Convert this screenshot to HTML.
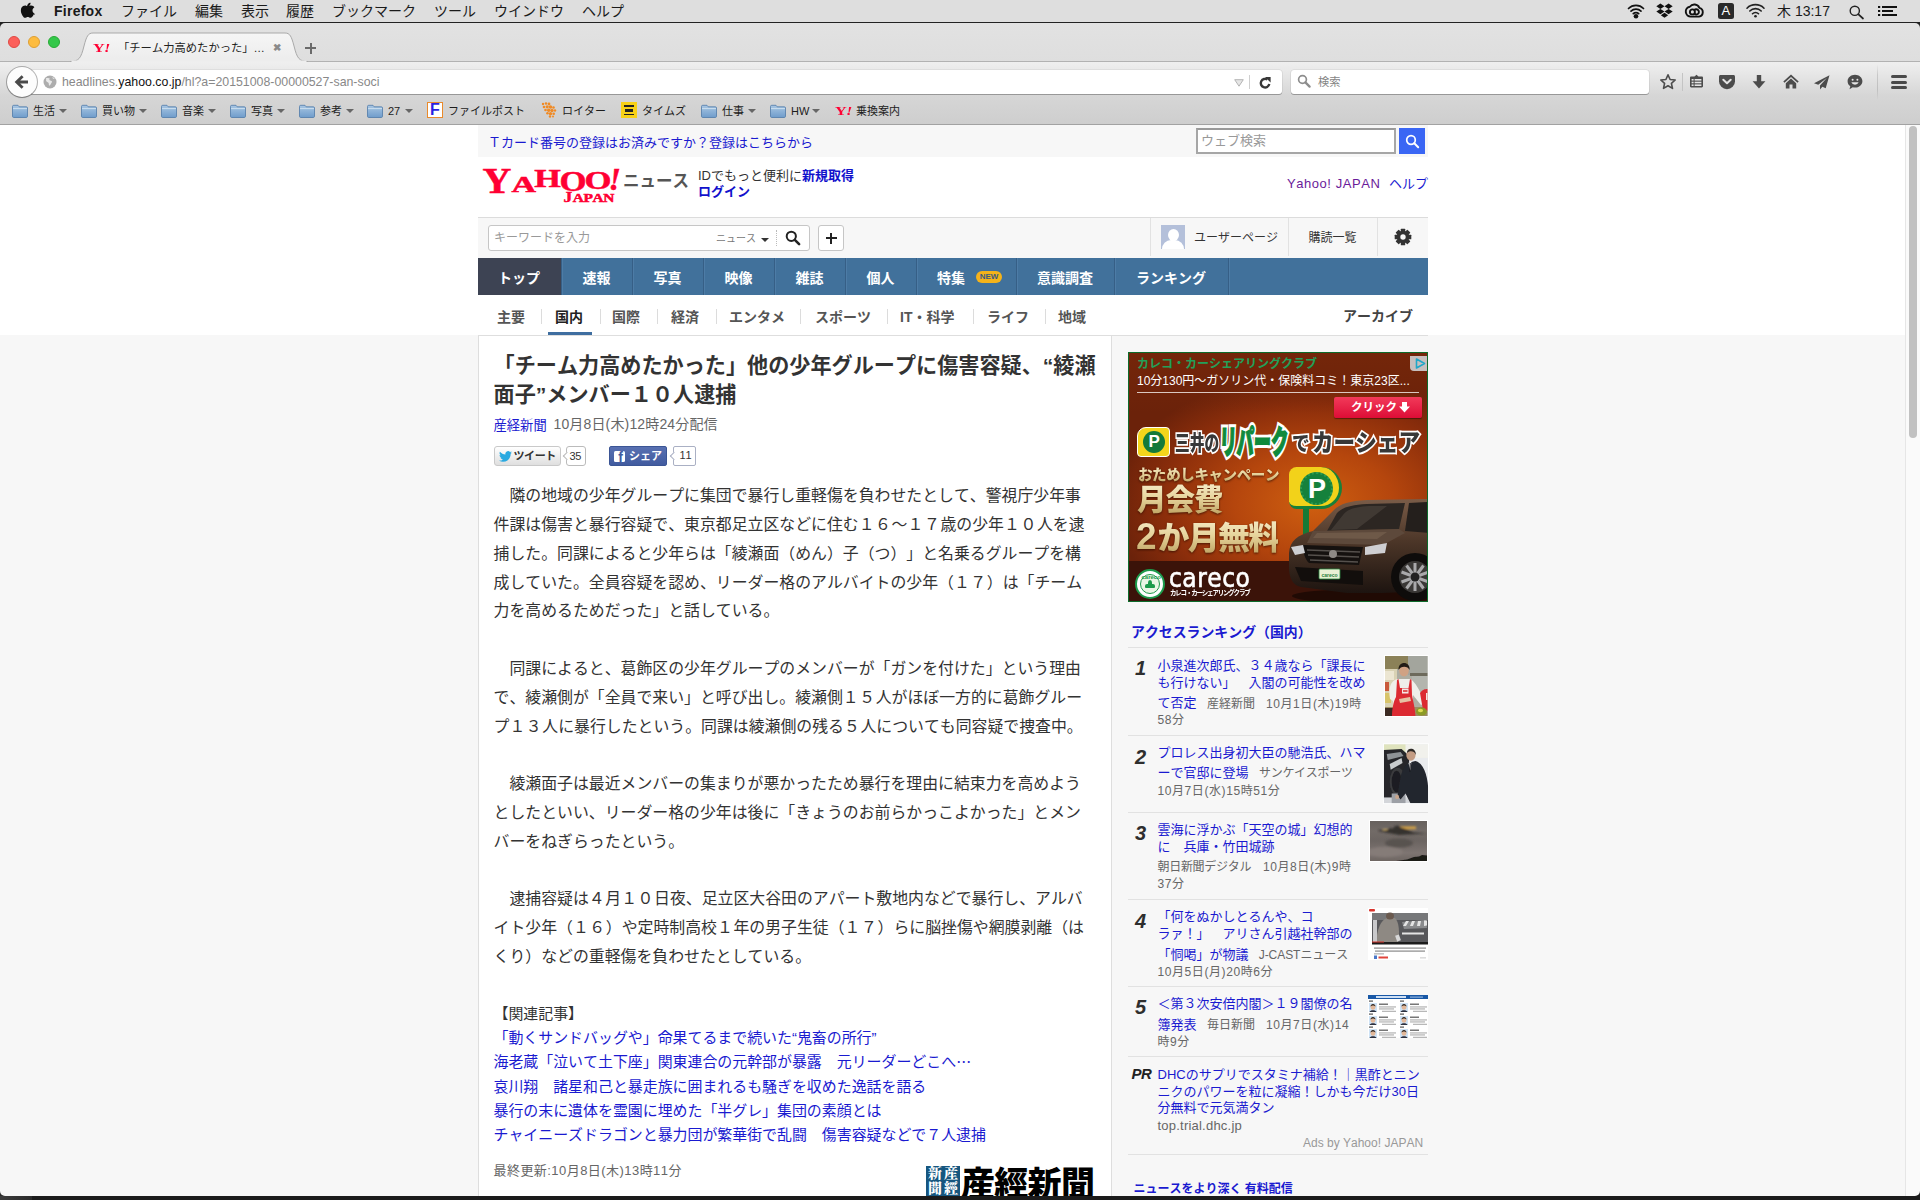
<!DOCTYPE html>
<html lang="ja">
<head>
<meta charset="utf-8">
<title>「チーム力高めたかった」他の少年グループに傷害容疑</title>
<style>
*{box-sizing:border-box;margin:0;padding:0}
html,body{width:1920px;height:1200px;overflow:hidden;background:#f7f7f7}
body{position:relative;font-family:"Liberation Sans","Noto Sans CJK JP",sans-serif;font-size:13px;color:#333;-webkit-font-smoothing:antialiased;text-spacing-trim:space-all;font-kerning:none}
.abs{position:absolute}
.t{position:absolute;white-space:nowrap;line-height:1}
a{color:#0000de;text-decoration:none}
svg{display:block;position:absolute;overflow:visible}

/* ---------- mac menubar ---------- */
#menubar{left:0;top:0;width:1920px;height:22px;background:#dedede}
#menubar .t{top:3px;font-size:14px;line-height:16px;color:#1a1a1a}
#winedge{left:0;top:22px;width:1920px;height:1px;background:#222}
/* ---------- firefox chrome ---------- */
#tabbar{left:0;top:23px;width:1920px;height:39px;background:linear-gradient(#e2e2e2,#dedede)}
#navbar{left:0;top:61px;width:1920px;height:64px;background:linear-gradient(#efefef 0,#e9e9e9 14%,#d6d6d6 54%,#cecece 100%);border-top:1px solid #b2b2b2;border-bottom:1px solid #a2a2a2}
.field{position:absolute;top:70.3px;height:23.7px;background:#fff;border-radius:3px;box-shadow:0 0 0 .6px rgba(0,0,0,.10),0 1px .5px rgba(0,0,0,.25)}
.bm{position:absolute;top:104px;font-size:11px;line-height:14px;color:#1c1c1c;white-space:nowrap}
.folder{position:absolute;top:104px;width:16px;height:13px}
.dd{position:absolute;top:109px;width:0;height:0;border:4px solid transparent;border-top:4px solid #666;border-bottom:0}

/* ---------- page ---------- */
.gold{background:linear-gradient(#f6ecc8 0,#e6d39b 45%,#b99c5a 100%);-webkit-background-clip:text;background-clip:text;color:transparent;filter:drop-shadow(0 1px 1px rgba(40,10,0,.7))}

.rk{font-size:13px;line-height:17px;color:#1a1ad0}
.mt{font-size:12px;line-height:17px;color:#666}

.ttl{font-size:21.14px;line-height:30px;font-weight:bold;color:#333}
.fw{letter-spacing:.6px}
.bd{font-size:15.88px;line-height:28.8px;color:#333}
.lk{font-size:14.93px;line-height:20px;color:#1a1ad0}

#pagewhite{left:0;top:125px;width:1905px;height:210px;background:#fff}
#scroll{left:1905px;top:125px;width:15px;height:1071px;background:#fafafa;border-left:1px solid #e6e6e6}
#thumb{left:1909px;top:126px;width:8px;height:312px;border-radius:4px;background:#c1c1c1}
#blackbar{left:0;top:1195.6px;width:1920px;height:5px;background:#1b1b1b}
</style>
</head>
<body>
<!-- page background -->
<div class="abs" id="pagewhite"></div>

<!-- ===== top strip ===== -->
<div class="abs" style="left:478px;top:125px;width:950px;height:32px;background:#f7f7f7"></div>
<a class="t" style="left:488px;top:136px;font-size:13px;line-height:14px;color:#1a1ad0">Ｔカード番号の登録はお済みですか？登録はこちらから</a>
<div class="abs" style="left:1196px;top:128px;width:200px;height:26px;background:#fff;border:2px solid #a6a6a6;border-top-color:#999"></div>
<span class="t" style="left:1201px;top:134px;font-size:13px;line-height:14px;color:#999">ウェブ検索</span>
<div class="abs" style="left:1399px;top:128px;width:26px;height:26px;background:#3a66f4"></div>
<svg style="left:1405px;top:134px" width="15" height="15" viewBox="0 0 15 15"><circle cx="6" cy="6" r="4.300" fill="none" stroke="#fff" stroke-width="1.700"/><path d="M9.300 9.300l3.900 3.900" stroke="#fff" stroke-width="2" stroke-linecap="round"/></svg>

<!-- ===== logo row ===== -->
<svg style="left:476px;top:160px" width="150" height="50" viewBox="0 0 150 50" font-family="'Liberation Serif',serif" font-weight="bold" fill="#ff0033" stroke="#ff0033" stroke-width=".5">
<text transform="translate(6.5,33.2) scale(1.08,.97)" font-size="37">Y</text>
<text transform="translate(35.5,32) scale(1.58,1.08)" font-size="21.5">A</text>
<text transform="translate(58.2,27) scale(1.40,1)" font-size="24.4">H</text>
<text transform="translate(83.6,31.4) scale(1.2,.98)" font-size="29">O</text>
<text transform="translate(108.4,28.8) scale(1.36,1)" font-size="25.5">O</text>
<text transform="translate(132.5,30)" font-size="32" font-style="italic">!</text>
<text transform="translate(87.5,41.6) scale(1.12,1)" font-size="15.5">J</text>
<text transform="translate(96.8,41.6) scale(1.22,1)" font-size="12.6" style="letter-spacing:-.3px">APAN</text>
</svg>
<span class="t" style="left:623px;top:171px;font-size:16.5px;line-height:20px;font-weight:bold;color:#555">ニュース</span>
<span class="t" style="left:698px;top:169px;font-size:13px;line-height:14px;color:#333">IDでもっと便利に<a style="font-weight:bold;color:#1111cc">新規取得</a></span>
<a class="t" style="left:698px;top:185px;font-size:13px;line-height:14px;font-weight:bold;color:#1111cc">ログイン</a>
<a class="t" style="left:1287px;top:177px;font-size:13px;line-height:14px;color:#6a1b9a;letter-spacing:.55px">Yahoo! JAPAN</a>
<a class="t" style="left:1389px;top:177px;font-size:13px;line-height:14px;color:#1a1ad0">ヘルプ</a>

<!-- ===== search row ===== -->
<div class="abs" style="left:478px;top:217px;width:950px;height:41px;background:#f7f7f7;border-top:1px solid #dcdcdc"></div>
<div class="abs" style="left:488px;top:225px;width:322px;height:26px;background:#fff;border:1px solid #c6c6c6;border-radius:3px"></div>
<span class="t" style="left:494px;top:232px;font-size:12px;line-height:13px;color:#999">キーワードを入力</span>
<span class="t" style="left:716px;top:233px;font-size:10px;line-height:11px;color:#777">ニュース</span>
<div class="abs" style="left:761px;top:238px;width:0;height:0;border:4px solid transparent;border-top:4.500px solid #333;border-bottom:0"></div>
<div class="abs" style="left:776px;top:230px;width:0;height:16px;border-left:1px dotted #bbb"></div>
<svg style="left:785px;top:230px" width="16" height="16" viewBox="0 0 16 16"><circle cx="6.300" cy="6.300" r="4.600" fill="none" stroke="#222" stroke-width="2"/><path d="M9.800 9.800l4.300 4.300" stroke="#222" stroke-width="2.600" stroke-linecap="round"/></svg>
<div class="abs" style="left:818px;top:225px;width:26px;height:26px;background:#fff;border:1px solid #c6c6c6;border-radius:3px"></div>
<div class="abs" style="left:825.500px;top:237px;width:11px;height:2px;background:#222"></div>
<div class="abs" style="left:830px;top:232.500px;width:2px;height:11px;background:#222"></div>

<div class="abs" style="left:1150px;top:218px;width:1px;height:38px;background:#e2e2e2"></div>
<div class="abs" style="left:1288px;top:218px;width:1px;height:38px;background:#e2e2e2"></div>
<div class="abs" style="left:1377px;top:218px;width:1px;height:38px;background:#e2e2e2"></div>
<div class="abs" style="left:1161px;top:225px;width:24px;height:24px;background:#b4c0da;overflow:hidden"><div class="abs" style="left:6.500px;top:4px;width:11px;height:12px;border-radius:50%;background:#fff"></div><div class="abs" style="left:1px;top:15px;width:22px;height:16px;border-radius:9px 9px 0 0;background:#fff"></div></div>
<span class="t" style="left:1194px;top:231.7px;font-size:12px;line-height:13px;color:#333">ユーザーページ</span>
<span class="t" style="left:1308.5px;top:231.7px;font-size:12px;line-height:13px;color:#333">購読一覧</span>
<svg style="left:1394px;top:228px" width="18" height="18" viewBox="0 0 18 18"><g transform="translate(9,9)" fill="#333"><circle r="6.200"/><g id="gt"><rect x="-2.200" y="-8.300" width="4.400" height="4" rx=".5"/></g><use href="#gt" transform="rotate(45)"/><use href="#gt" transform="rotate(90)"/><use href="#gt" transform="rotate(135)"/><use href="#gt" transform="rotate(180)"/><use href="#gt" transform="rotate(225)"/><use href="#gt" transform="rotate(270)"/><use href="#gt" transform="rotate(315)"/><circle r="2.700" fill="#f7f7f7"/></g></svg>

<!-- ===== global nav ===== -->
<div class="abs" style="left:478px;top:258px;width:950px;height:37px;background:#41719b"></div>
<div class="abs" style="left:478px;top:258px;width:84px;height:37px;background:#3d4353"></div>
<span class="t" style="left:477px;top:269.5px;width:84px;text-align:center;font-size:14px;line-height:16px;font-weight:bold;color:#fff">トップ</span>
<span class="t" style="left:561px;top:269.5px;width:71px;text-align:center;font-size:14px;line-height:16px;font-weight:bold;color:#fff">速報</span>
<div class="abs" style="left:561px;top:258px;width:1px;height:37px;background:#365f86"></div><div class="abs" style="left:562px;top:258px;width:1px;height:37px;background:#4d7ca6"></div>
<span class="t" style="left:632px;top:269.5px;width:71px;text-align:center;font-size:14px;line-height:16px;font-weight:bold;color:#fff">写真</span>
<div class="abs" style="left:632px;top:258px;width:1px;height:37px;background:#365f86"></div><div class="abs" style="left:633px;top:258px;width:1px;height:37px;background:#4d7ca6"></div>
<span class="t" style="left:703px;top:269.5px;width:71px;text-align:center;font-size:14px;line-height:16px;font-weight:bold;color:#fff">映像</span>
<div class="abs" style="left:703px;top:258px;width:1px;height:37px;background:#365f86"></div><div class="abs" style="left:704px;top:258px;width:1px;height:37px;background:#4d7ca6"></div>
<span class="t" style="left:774px;top:269.5px;width:71px;text-align:center;font-size:14px;line-height:16px;font-weight:bold;color:#fff">雑誌</span>
<div class="abs" style="left:774px;top:258px;width:1px;height:37px;background:#365f86"></div><div class="abs" style="left:775px;top:258px;width:1px;height:37px;background:#4d7ca6"></div>
<span class="t" style="left:845px;top:269.5px;width:71px;text-align:center;font-size:14px;line-height:16px;font-weight:bold;color:#fff">個人</span>
<div class="abs" style="left:845px;top:258px;width:1px;height:37px;background:#365f86"></div><div class="abs" style="left:846px;top:258px;width:1px;height:37px;background:#4d7ca6"></div>
<span class="t" style="left:937px;top:269.5px;font-size:14px;line-height:16px;font-weight:bold;color:#fff">特集</span>
<span class="t" style="left:976px;top:271px;width:26px;height:12px;border-radius:6px;background:#f5b31a;color:#3a5a80;font-size:8px;line-height:12px;text-align:center;font-weight:bold">NEW</span>
<div class="abs" style="left:916px;top:258px;width:1px;height:37px;background:#365f86"></div><div class="abs" style="left:917px;top:258px;width:1px;height:37px;background:#4d7ca6"></div>
<span class="t" style="left:1016px;top:269.5px;width:98px;text-align:center;font-size:14px;line-height:16px;font-weight:bold;color:#fff">意識調査</span>
<div class="abs" style="left:1016px;top:258px;width:1px;height:37px;background:#365f86"></div><div class="abs" style="left:1017px;top:258px;width:1px;height:37px;background:#4d7ca6"></div>
<span class="t" style="left:1114px;top:269.5px;width:114px;text-align:center;font-size:14px;line-height:16px;font-weight:bold;color:#fff">ランキング</span>
<div class="abs" style="left:1114px;top:258px;width:1px;height:37px;background:#365f86"></div><div class="abs" style="left:1115px;top:258px;width:1px;height:37px;background:#4d7ca6"></div>
<div class="abs" style="left:1228px;top:258px;width:1px;height:37px;background:#365f86"></div><div class="abs" style="left:1229px;top:258px;width:1px;height:37px;background:#4d7ca6"></div>

<!-- ===== sub nav ===== -->
<span class="t" style="left:497px;top:308.7px;font-size:14px;line-height:16px;font-weight:bold;color:#555">主要</span>
<span class="t" style="left:555px;top:308.7px;font-size:14px;line-height:16px;font-weight:bold;color:#222">国内</span>
<span class="t" style="left:612px;top:308.7px;font-size:14px;line-height:16px;font-weight:bold;color:#555">国際</span>
<span class="t" style="left:671px;top:308.7px;font-size:14px;line-height:16px;font-weight:bold;color:#555">経済</span>
<span class="t" style="left:729px;top:308.7px;font-size:14px;line-height:16px;font-weight:bold;color:#555">エンタメ</span>
<span class="t" style="left:815px;top:308.7px;font-size:14px;line-height:16px;font-weight:bold;color:#555">スポーツ</span>
<span class="t" style="left:900px;top:308.7px;font-size:14px;line-height:16px;font-weight:bold;color:#555">IT・科学</span>
<span class="t" style="left:987px;top:308.7px;font-size:14px;line-height:16px;font-weight:bold;color:#555">ライフ</span>
<span class="t" style="left:1058px;top:308.7px;font-size:14px;line-height:16px;font-weight:bold;color:#555">地域</span>
<div class="abs" style="left:541px;top:309px;width:1px;height:15px;background:#dcdcdc"></div>
<div class="abs" style="left:600px;top:309px;width:1px;height:15px;background:#dcdcdc"></div>
<div class="abs" style="left:657px;top:309px;width:1px;height:15px;background:#dcdcdc"></div>
<div class="abs" style="left:716px;top:309px;width:1px;height:15px;background:#dcdcdc"></div>
<div class="abs" style="left:800px;top:309px;width:1px;height:15px;background:#dcdcdc"></div>
<div class="abs" style="left:887px;top:309px;width:1px;height:15px;background:#dcdcdc"></div>
<div class="abs" style="left:973px;top:309px;width:1px;height:15px;background:#dcdcdc"></div>
<div class="abs" style="left:1045px;top:309px;width:1px;height:15px;background:#dcdcdc"></div>
<span class="t" style="left:1343px;top:307.5px;font-size:14px;line-height:16px;font-weight:bold;color:#444">アーカイブ</span>
<div class="abs" style="left:548px;top:332px;width:44px;height:4px;background:#3f6ea0"></div>

<!-- ===== article ===== -->
<div class="abs" style="left:478px;top:335px;width:950px;height:1px;background:#dedede"></div>
<div class="abs" style="left:478px;top:335px;width:634px;height:870px;background:#fff;border:1px solid #dedede"></div>
<div class="t ttl" style="left:493.5px;top:351px">「チーム力高めたかった」他の少年グループに傷害容疑、“綾瀬</div>
<div class="t ttl" style="left:493.5px;top:380px">面子”メンバー１０人逮捕</div>
<a class="t" style="left:493.5px;top:419px;font-size:13.3px;line-height:14px;color:#1a1ad0">産経新聞</a>
<span class="t" id="date1" style="left:553.5px;top:415.7px;font-size:14px;line-height:16px;color:#666;letter-spacing:.15px">10月8日(木)12時24分配信</span>
<div class="abs" style="left:494px;top:446px;width:66.5px;height:19.5px;border:1px solid #c9c9c9;border-radius:3px;background:linear-gradient(#fff,#dfdfdf)"></div>
<svg style="left:498.5px;top:451px" width="13" height="11" viewBox="0 0 24 20"><path fill="#2aa9e0" d="M24 2.400c-.9.400-1.800.700-2.800.800 1-.600 1.800-1.600 2.200-2.700-1 .600-2 1-3.100 1.200A4.900 4.900 0 0 0 11.900 6.200C7.800 6 4.200 4 1.700 1 1.300 1.700 1 2.600 1 3.500c0 1.700.900 3.200 2.200 4.100-.8 0-1.600-.200-2.200-.600v.100c0 2.400 1.700 4.400 3.900 4.800-.7.200-1.500.200-2.200.100.600 2 2.400 3.400 4.600 3.400A9.900 9.900 0 0 1 0 17.500 13.900 13.900 0 0 0 7.500 19.700c9.100 0 14-7.500 14-14v-.600c1-.700 1.800-1.600 2.500-2.700z"/></svg>
<span class="t" style="left:513.5px;top:450px;font-size:11px;line-height:12px;font-weight:bold;color:#333;letter-spacing:-.4px">ツイート</span>
<div class="abs" style="left:566px;top:446px;width:19.5px;height:19.5px;border:1px solid #bbb;border-radius:3px;background:#fff"></div>
<div class="abs" style="left:563.5px;top:453px;width:6px;height:6px;background:#fff;border-left:1px solid #bbb;border-bottom:1px solid #bbb;transform:rotate(45deg)"></div>
<span class="t" style="left:569.5px;top:449.5px;font-size:11px;line-height:12px;color:#333;letter-spacing:-.4px">35</span>
<div class="abs" style="left:609px;top:446px;width:58px;height:20px;border-radius:2px;background:linear-gradient(#5870b1,#415b9f);border:1px solid #3b5595"></div>
<div class="abs" style="left:613.5px;top:451px;width:11px;height:11px;border-radius:1.5px;background:#fff"></div>
<span class="t" style="left:618.3px;top:450.5px;font-size:14px;line-height:13px;font-weight:bold;color:#415b9f">f</span>
<span class="t" style="left:629px;top:449.5px;font-size:11px;line-height:12px;font-weight:bold;color:#fff">シェア</span>
<div class="abs" style="left:673px;top:446px;width:22.5px;height:19.5px;border:1px solid #aab0c4;border-radius:2px;background:#fff"></div>
<div class="abs" style="left:670.5px;top:453px;width:6px;height:6px;background:#fff;border-left:1px solid #aab0c4;border-bottom:1px solid #aab0c4;transform:rotate(45deg)"></div>
<span class="t" style="left:679.5px;top:449px;font-size:11px;line-height:12px;color:#333;letter-spacing:-.2px">11</span>
<div class="t bd" style="left:493.5px;top:482.4px">　隣の地域の少年グループに集団で暴行し重軽傷を負わせたとして、警視庁少年事</div>
<div class="t bd" style="left:493.5px;top:511.0px">件課は傷害と暴行容疑で、東京都足立区などに住む<span class="fw">１６</span>〜<span class="fw">１７</span>歳の少年<span class="fw">１０</span>人を逮</div>
<div class="t bd" style="left:493.5px;top:539.8px">捕した。同課によると少年らは「綾瀬面（めん）子（つ）」と名乗るグループを構</div>
<div class="t bd" style="left:493.5px;top:568.6px">成していた。全員容疑を認め、リーダー格のアルバイトの少年（<span class="fw">１７</span>）は「チーム</div>
<div class="t bd" style="left:493.5px;top:597.4px">力を高めるためだった」と話している。</div>
<div class="t bd" style="left:493.5px;top:655.0px">　同課によると、葛飾区の少年グループのメンバーが「ガンを付けた」という理由</div>
<div class="t bd" style="left:493.5px;top:683.8px">で、綾瀬側が「全員で来い」と呼び出し。綾瀬側<span class="fw">１５</span>人がほぼ一方的に葛飾グルー</div>
<div class="t bd" style="left:493.5px;top:712.6px">プ<span class="fw">１３</span>人に暴行したという。同課は綾瀬側の残る<span class="fw">５</span>人についても同容疑で捜査中。</div>
<div class="t bd" style="left:493.5px;top:770.2px">　綾瀬面子は最近メンバーの集まりが悪かったため暴行を理由に結束力を高めよう</div>
<div class="t bd" style="left:493.5px;top:799.0px">としたといい、リーダー格の少年は後に「きょうのお前らかっこよかった」とメン</div>
<div class="t bd" style="left:493.5px;top:827.8px">バーをねぎらったという。</div>
<div class="t bd" style="left:493.5px;top:885.4px">　逮捕容疑は<span class="fw">４</span>月<span class="fw">１０</span>日夜、足立区大谷田のアパート敷地内などで暴行し、アルバ</div>
<div class="t bd" style="left:493.5px;top:914.2px">イト少年（<span class="fw">１６</span>）や定時制高校<span class="fw">１</span>年の男子生徒（<span class="fw">１７</span>）らに脳挫傷や網膜剥離（は</div>
<div class="t bd" style="left:493.5px;top:943.0px">くり）などの重軽傷を負わせたとしている。</div>
<div class="t" style="left:493.5px;top:1003.8px;font-size:14.93px;line-height:20px;color:#333">【関連記事】</div>
<a class="t lk" style="left:493.5px;top:1028.1px">「動くサンドバッグや」命果てるまで続いた“鬼畜の所行”</a>
<a class="t lk" style="left:493.5px;top:1052.4px">海老蔵「泣いて土下座」関東連合の元幹部が暴露　元リーダーどこへ</a>
<a class="t lk" style="left:956.3px;top:1052.4px;font-family:'Noto Sans CJK JP',sans-serif">…</a>
<a class="t lk" style="left:493.5px;top:1076.8px">哀川翔　諸星和己と暴走族に囲まれるも騒ぎを収めた逸話を語る</a>
<a class="t lk" style="left:493.5px;top:1101.1px">暴行の末に遺体を霊園に埋めた「半グレ」集団の素顔とは</a>
<a class="t lk" style="left:493.5px;top:1125.2px">チャイニーズドラゴンと暴力団が繁華街で乱闘　傷害容疑などで７人逮捕</a>
<span class="t" id="upd" style="left:493.5px;top:1163px;font-size:13px;line-height:16px;color:#666;letter-spacing:.45px">最終更新:10月8日(木)13時11分</span>
<div class="abs" style="left:926px;top:1166px;width:34px;height:34px;background:#16567f"></div>
<span class="t" style="left:928px;top:1167px;font-family:'Liberation Serif','Noto Serif CJK JP','Noto Serif CJK SC',serif;font-weight:900;font-size:14px;line-height:14px;color:#fff;letter-spacing:2px">新産</span>
<span class="t" style="left:928px;top:1182px;font-family:'Liberation Serif','Noto Serif CJK JP','Noto Serif CJK SC',serif;font-weight:900;font-size:14px;line-height:14px;color:#fff;letter-spacing:2px">聞經</span>
<span class="t" style="left:961px;top:1162px;font-family:'Noto Sans CJK JP',sans-serif;font-weight:900;font-size:34px;line-height:40px;color:#000;letter-spacing:-.7px">産經新聞</span>
<!-- ===== ad ===== -->
<div class="abs" id="ad" style="left:1128px;top:352px;width:300px;height:250px;overflow:hidden;border:1px solid #0d6b2b;background:radial-gradient(ellipse 200px 130px at 185px 150px,#cf5f10 0,#b5460d 40%,#8c2e0b 75%,#6b220a 100%)">
<div class="abs" style="left:0;top:0;width:300px;height:60px;background:linear-gradient(#74260a,rgba(116,38,10,0))"></div>
<div class="abs" style="left:0;top:208px;width:300px;height:42px;background:#3b1309"></div>
<span class="t" style="left:8px;top:4px;font-size:12px;line-height:15px;font-weight:bold;color:#23a05a">カレコ・カーシェアリングクラブ</span>
<span class="t" style="left:8px;top:21px;font-size:12px;line-height:15px;color:#fff;letter-spacing:0">10分130円〜ガソリン代・保険料コミ！東京23区...</span>
<div class="abs" style="left:8px;top:39px;width:282px;height:1px;background:rgba(255,255,255,.75)"></div>
<div class="abs" style="left:281px;top:3px;width:18px;height:15px;background:rgba(214,218,222,.85);border-radius:0 0 0 4px"></div>
<svg style="left:286px;top:5px" width="11" height="11" viewBox="0 0 11 11"><path d="M1.500 1 L9.500 5.500 L1.500 10 Z" fill="none" stroke="#1fa7c9" stroke-width="1.600" stroke-linejoin="round"/></svg>
<div class="abs" style="left:205px;top:44px;width:88px;height:21px;border-radius:2px;background:linear-gradient(#f23a5a,#dd0d36);box-shadow:0 1px 1px rgba(0,0,0,.4)"></div>
<span class="t" style="left:222px;top:48px;font-size:11.500px;line-height:13px;font-weight:bold;color:#fff">クリック</span>
<svg style="left:270px;top:49px" width="11" height="11" viewBox="0 0 11 11"><path d="M3 0h5v4.500h3L5.500 10.500 0 4.500h3z" fill="#fff"/></svg>
<!-- repark row -->
<div class="abs" style="left:8px;top:74px;width:33px;height:30px;border-radius:9px 4px 4px 4px;background:#f3d51b;border:1.500px solid #fff"></div>
<div class="abs" style="left:14px;top:78px;width:22px;height:22px;border-radius:50%;background:#137a3a"></div>
<span class="t" style="left:19.500px;top:80px;font-size:17px;line-height:18px;font-weight:900;color:#fff;font-family:'Liberation Sans',sans-serif">P</span>
<span class="t" style="left:46.0px;top:77.0px;font-size:21.0px;line-height:26px;font-weight:900;letter-spacing:0.0px;transform:scaleX(0.700);transform-origin:0 100%;color:#fff;-webkit-text-stroke:3.5px #fff">三井の</span>
<span class="t" style="left:46.0px;top:77.0px;font-size:21.0px;line-height:26px;font-weight:900;letter-spacing:0.0px;transform:scaleX(0.700);transform-origin:0 100%;color:#383838">三井の</span>
<span class="t" style="left:163.0px;top:78.0px;font-size:20.0px;line-height:26px;font-weight:900;letter-spacing:0.0px;transform:scaleX(0.880);transform-origin:0 100%;color:#fff;-webkit-text-stroke:3.5px #fff">で</span>
<span class="t" style="left:163.0px;top:78.0px;font-size:20.0px;line-height:26px;font-weight:900;letter-spacing:0.0px;transform:scaleX(0.880);transform-origin:0 100%;color:#383838">で</span>
<span class="t" style="left:183.0px;top:75.0px;font-size:24.0px;line-height:30px;font-weight:900;letter-spacing:0.0px;transform:scaleX(0.900);transform-origin:0 100%;color:#fff;-webkit-text-stroke:3.5px #fff">カーシェア</span>
<span class="t" style="left:183.0px;top:75.0px;font-size:24.0px;line-height:30px;font-weight:900;letter-spacing:0.0px;transform:scaleX(0.900);transform-origin:0 100%;color:#383838">カーシェア</span>
<span class="t" style="left:90.0px;top:70.0px;font-size:33.0px;line-height:40px;font-weight:900;letter-spacing:0.0px;transform:scaleX(0.520) skewX(-3deg);transform-origin:0 100%;color:#fff;-webkit-text-stroke:7.5px #fff">リパーク</span>
<span class="t" style="left:90.0px;top:70.0px;font-size:33.0px;line-height:40px;font-weight:900;letter-spacing:0.0px;transform:scaleX(0.520) skewX(-3deg);transform-origin:0 100%;color:#0f8a3c;-webkit-text-stroke:1.6px #0f8a3c">リパーク</span>
<!-- campaign -->
<span class="t gold" style="left:9px;top:112.5px;font-size:14.500px;line-height:18px;font-weight:900;letter-spacing:-.4px">おためしキャンペーン</span>
<span class="t gold" style="left:8px;top:129.5px;font-size:29.5px;line-height:34px;font-weight:900;letter-spacing:-1px">月会費</span>
<span class="t gold" style="left:7px;top:164.5px;font-size:32px;line-height:38px;font-weight:900;letter-spacing:-1.800px"><span style="font-size:37px;font-family:'Liberation Sans',sans-serif;letter-spacing:0;margin-right:1px">2</span>か月無料</span>
<!-- P sign -->
<div class="abs" style="left:174px;top:136px;width:6px;height:50px;background:#177a36"></div>
<div class="abs" style="left:160px;top:114px;width:53px;height:42px;border-radius:8px 22px 22px 8px;background:#f2d21a;border-right:3px solid #18803a;border-bottom:3px solid #18803a"></div>
<div class="abs" style="left:171px;top:119px;width:33px;height:33px;border-radius:50%;background:#15813c;border:2px dotted #2a9a50"></div>
<span class="t" style="left:179px;top:122px;font-size:27px;line-height:28px;font-weight:bold;color:#fff;font-family:'Liberation Sans',sans-serif">P</span>
<!-- car -->
<svg style="left:158px;top:140px" width="142" height="110" viewBox="0 0 142 110">
<defs><linearGradient id="cg" x1="0" y1="0" x2="0" y2="1"><stop offset="0" stop-color="#7a5c48"/><stop offset=".45" stop-color="#4c3628"/><stop offset="1" stop-color="#1d1410"/></linearGradient></defs>
<ellipse cx="80" cy="103" rx="75" ry="7" fill="rgba(0,0,0,.45)"/>
<path d="M2 60 C3 48 10 42 26 38 L46 18 C52 11 62 8 80 7 L142 6 L142 98 L96 100 L60 100 L14 94 C5 92 2 84 2 74 Z" fill="url(#cg)"/>
<path d="M50 20 C56 14 64 12 80 11 L118 10 L112 36 L40 38 Z" fill="#2c2622"/><path d="M56 22 C60 16 68 14 82 13 L100 13 L70 36 L44 37Z" fill="#4f4640" opacity=".6"/>
<path d="M122 10 L142 9 L142 40 L118 38 Z" fill="#241f1c"/>
<path d="M26 38 L112 36 L118 40 L96 52 L20 50 Z" fill="#5d493b"/><path d="M30 40 L100 39 L90 46 L26 45Z" fill="#7a6452" opacity=".6"/>
<path d="M16 52 L76 54 L72 72 L22 70 C18 66 16 60 16 52Z" fill="#15110f"/><g stroke="#55504c" stroke-width="1.300"><path d="M20 57 L73 59"/><path d="M21 62 L72 64"/><path d="M23 67 L71 69"/></g><circle cx="46" cy="61" r="4" fill="#8f8a86"/>
<path d="M4 54 L16 52 L18 60 L8 62Z" fill="#cfcfd2"/><path d="M78 54 L100 50 L98 60 L78 62Z" fill="#cfcfd2"/>
<path d="M8 74 L76 78 L76 92 L14 88 Z" fill="#120e0c"/><rect x="32" y="76" width="21" height="10" rx="1" fill="#e9efd4" stroke="#2c8a43" stroke-width=".8"/><text x="34.500" y="83.500" font-family="'Liberation Sans',sans-serif" font-size="5" font-weight="bold" fill="#1f7d3a">careco</text>
<circle cx="128" cy="84" r="24" fill="#0e0c0b"/><circle cx="128" cy="84" r="16" fill="#3a3836"/><g stroke="#a9a9ab" stroke-width="3"><path d="M128 70 L128 98"/><path d="M114.500 79 L141.500 89"/><path d="M141.500 79 L114.500 89"/><path d="M119.500 72.500 L136.500 95.500"/><path d="M136.500 72.500 L119.500 95.500"/></g><circle cx="128" cy="84" r="4.500" fill="#222"/>
</svg>
<!-- careco logo -->
<div class="abs" style="left:6px;top:216px;width:30px;height:30px;border-radius:50%;background:#fff;border:2.500px solid #1d9a4b"></div>
<div class="abs" style="left:11px;top:221px;width:20px;height:20px;border-radius:50%;background:#eaf5e4;border:1px solid #1d9a4b"></div>
<span class="t" style="left:12.500px;top:221px;font-size:6px;line-height:7px;font-weight:bold;color:#1d9a4b">careco</span>
<div class="abs" style="left:16px;top:231px;width:10px;height:4px;border-radius:2px 2px 1px 1px;background:#1d9a4b"></div>
<div class="abs" style="left:19px;top:227px;width:4px;height:5px;border-radius:50% 50% 0 0;background:#1d9a4b"></div>
<span class="t" style="left:40px;top:210px;font-size:27px;line-height:30px;color:#fff;font-family:'DejaVu Sans','Liberation Sans',sans-serif;letter-spacing:.6px;transform:scaleX(.865);transform-origin:0 0;-webkit-text-stroke:.7px #fff">careco</span>
<span class="t" style="left:41px;top:235px;font-size:7.2px;line-height:9px;font-weight:bold;color:#fff;letter-spacing:-1.3px;transform:scaleX(.9);transform-origin:0 0">カレコ・カーシェアリングクラブ</span>
</div>

<!-- ===== ranking ===== -->
<a class="t" style="left:1131px;top:624px;font-size:13.9px;line-height:17px;font-weight:bold;color:#1a1ad0">アクセスランキング（国内）</a>
<div class="abs" style="left:1128px;top:647px;width:300px;height:1px;background:#e2e2e2"></div>
<div class="abs" style="left:1128px;top:735px;width:300px;height:1px;background:#e2e2e2"></div>
<div class="abs" style="left:1128px;top:812px;width:300px;height:1px;background:#e2e2e2"></div>
<div class="abs" style="left:1128px;top:899px;width:300px;height:1px;background:#e2e2e2"></div>
<div class="abs" style="left:1128px;top:986px;width:300px;height:1px;background:#e2e2e2"></div>
<div class="abs" style="left:1128px;top:1056px;width:300px;height:1px;background:#e2e2e2"></div>
<div class="abs" style="left:1128px;top:1154px;width:300px;height:1px;background:#e2e2e2"></div>
<span class="t" style="left:1135px;top:657.2px;font-size:20px;line-height:22px;font-weight:bold;font-style:italic;color:#2e2e2e">1</span>
<span class="t" style="left:1135px;top:746.0px;font-size:20px;line-height:22px;font-weight:bold;font-style:italic;color:#2e2e2e">2</span>
<span class="t" style="left:1135px;top:822.2px;font-size:20px;line-height:22px;font-weight:bold;font-style:italic;color:#2e2e2e">3</span>
<span class="t" style="left:1135px;top:909.5px;font-size:20px;line-height:22px;font-weight:bold;font-style:italic;color:#2e2e2e">4</span>
<span class="t" style="left:1135px;top:996.0px;font-size:20px;line-height:22px;font-weight:bold;font-style:italic;color:#2e2e2e">5</span>
<span class="t" style="left:1131.5px;top:1065px;font-size:15px;line-height:18px;font-weight:bold;font-style:italic;color:#222;letter-spacing:-.5px">PR</span>
<span class="t rk" style="left:1157.5px;top:657.4px">小泉進次郎氏、３４歳なら「課長に</span>
<span class="t rk" style="left:1157.5px;top:674.4px">も行けない」　入閣の可能性を改め</span>
<span class="t rk" style="left:1157.5px;top:694.4px">て否定</span>
<span class="t mt" style="left:1207.0px;top:695.6px">産経新聞</span>
<span class="t mt" style="left:1266.0px;top:695.6px;letter-spacing:.58px">10月1日(木)19時</span>
<span class="t mt" style="left:1157.5px;top:711.8px;letter-spacing:.58px">58分</span>
<span class="t rk" style="left:1157.5px;top:743.9px">プロレス出身初大臣の馳浩氏、ハマ</span>
<span class="t rk" style="left:1157.5px;top:763.9px">ーで官邸に登場</span>
<span class="t mt" style="left:1259.0px;top:765.1px;letter-spacing:-.3px">サンケイスポーツ</span>
<span class="t mt" style="left:1157.5px;top:782.6px;letter-spacing:.58px">10月7日(水)15時51分</span>
<span class="t rk" style="left:1157.5px;top:820.6px">雲海に浮かぶ「天空の城」幻想的</span>
<span class="t rk" style="left:1157.5px;top:838.1px">に　兵庫・竹田城跡</span>
<span class="t mt" style="left:1157.5px;top:859.3px;letter-spacing:-.3px">朝日新聞デジタル</span>
<span class="t mt" style="left:1263.0px;top:859.3px;letter-spacing:.58px">10月8日(木)9時</span>
<span class="t mt" style="left:1157.5px;top:876.1px;letter-spacing:.58px">37分</span>
<span class="t rk" style="left:1157.5px;top:908.1px">「何をぬかしとるんや、コ</span>
<span class="t rk" style="left:1157.5px;top:924.9px">ラァ！」　アリさん引越社幹部の</span>
<span class="t rk" style="left:1157.5px;top:945.6px">「恫喝」が物議</span>
<span class="t mt" style="left:1258.7px;top:946.8px;letter-spacing:-.05px">J-CASTニュース</span>
<span class="t mt" style="left:1157.5px;top:963.6px;letter-spacing:.58px">10月5日(月)20時6分</span>
<span class="t rk" style="left:1157.5px;top:994.9px">＜第３次安倍内閣＞１９閣僚の名</span>
<span class="t rk" style="left:1157.5px;top:1016.1px">簿発表</span>
<span class="t mt" style="left:1207.0px;top:1017.3px">毎日新聞</span>
<span class="t mt" style="left:1266.0px;top:1017.3px;letter-spacing:.58px">10月7日(水)14</span>
<span class="t mt" style="left:1157.5px;top:1033.6px;letter-spacing:.58px">時9分</span>
<span class="t rk" style="left:1157.5px;top:1065.6px">DHCのサプリでスタミナ補給！｜黒酢とニン</span>
<span class="t rk" style="left:1157.5px;top:1083.1px">ニクのパワーを粒に凝縮！しかも今だけ30日</span>
<span class="t rk" style="left:1157.5px;top:1099.4px">分無料で元気満タン</span>
<span class="t mt" style="left:1157.5px;top:1117.2px;font-size:13px;letter-spacing:.22px">top.trial.dhc.jp</span>
<span class="t mt" style="left:1303.0px;top:1134.8px;color:#999;letter-spacing:0">Ads by Yahoo! JAPAN</span>
<a class="t" style="left:1133.5px;top:1180.9px;font-size:12px;line-height:16px;font-weight:bold;color:#1a1ad0">ニュースをより深く 有料配信</a>
<svg style="left:1383.7px;top:654.8px" width="44.500" height="62" viewBox="0 0 44.500 62">
<defs><filter id="b1" x="-10%" y="-10%" width="120%" height="120%"><feGaussianBlur stdDeviation=".7"/></filter><clipPath id="c1"><rect x="1" y="1" width="42.500" height="60"/></clipPath></defs>
<rect width="44.500" height="62" fill="#fff"/>
<g clip-path="url(#c1)"><rect x="1" y="1" width="43" height="60" fill="#aeada2"/><g filter="url(#b1)">
<rect x="0" y="0" width="26" height="14" fill="#8b8158"/><rect x="24" y="0" width="21" height="20" fill="#a3a59d"/><rect x="26" y="18" width="19" height="3" fill="#6d6a5c"/><rect x="28" y="21" width="17" height="22" fill="#b3b5ae"/>
<rect x="0" y="14" width="13" height="38" fill="#d9d2b4"/><rect x="1" y="16" width="9" height="9" fill="#ece6d2"/><rect x="0" y="27" width="5" height="9" fill="#c95a3a"/><rect x="0" y="38" width="7" height="10" fill="#d8c46a"/>
<rect x="0" y="52" width="45" height="10" fill="#9c8c62"/><rect x="0" y="53" width="9" height="8" fill="#3a2a20"/>
<path d="M6 44 C4 32 7 26 13 24 L26 24 C31 26 36 36 41 47 L37 50 L29 40 L29 62 L9 62 L9 46 Z" fill="#efeeea"/>
<path d="M13 25 L14.500 24 L16 33 L24.500 33 L26 24 L27.500 25 L28 40 C29 46 31 52 31.500 62 L8 62 C8 54 9.500 46 12 42 Z" fill="#dc2a33"/>
<rect x="18" y="33.500" width="6.500" height="5" fill="#f4e8e6"/><rect x="19" y="35" width="4.500" height="2" fill="#e05a5a"/>
<ellipse cx="20" cy="15.500" rx="4.800" ry="6" fill="#d0a284"/><path d="M14.600 15 C13.500 6 26.500 5.500 25.600 15 C24 10.500 16.500 10.500 14.600 15 Z" fill="#241c17"/>
<path d="M36 38 C39 33 44 34 45 34 L45 56 L39 55 Z" fill="#dc2a33"/><rect x="42" y="38" width="1.500" height="7" fill="#f2e4e0"/><ellipse cx="37.500" cy="56.500" rx="5.500" ry="4" fill="#8d9a27"/><ellipse cx="36.500" cy="55.500" rx="2.600" ry="1.800" fill="#dcdc52"/>
<path d="M15 44 L26 42 L27 46 L16 48Z" fill="#e6c2a4"/>
</g></g></svg>

<svg style="left:1382.5px;top:743.3px" width="46" height="61.500" viewBox="-.8 -.8 46.600 61.600">
<defs><clipPath id="c2"><rect width="45" height="60"/></clipPath></defs>
<rect x="-.8" y="-.8" width="46.600" height="61.600" fill="#fff"/><g clip-path="url(#c2)"><rect width="45" height="60" fill="#e9ebee"/><g filter="url(#b1)">
<rect x="0" y="0" width="30" height="9" fill="#dfe3bd"/><rect x="22" y="0" width="23" height="14" fill="#f1f1ec"/>
<path d="M0 6 L18 5 L26 12 L24 44 L14 56 L0 56 Z" fill="#26272a"/><path d="M3 10 L17 8 L20 12 L4 16Z" fill="#8e9296"/><path d="M6 20 L18 14 L19 19 L7 26Z" fill="#c9ccce"/>
<ellipse cx="14" cy="38" rx="8" ry="14" fill="#3a3b3e"/><ellipse cx="13" cy="38" rx="5" ry="11" fill="#1d1d20"/>
<rect x="0" y="54" width="45" height="6" fill="#d4d6da"/><rect x="8" y="50" width="14" height="10" fill="#9da0a6"/>
<path d="M14 52 C16 36 18 24 24 19 L32 17 C40 19 44 30 45 44 L45 60 L27 60 L22 50 L17 56 Z" fill="#23252d"/>
<path d="M25 19 L28 17 L27 27 Z" fill="#f2f2f2"/><path d="M26.300 19 L27.300 19 L27 28 L26 28Z" fill="#15161c"/>
<ellipse cx="27.500" cy="11" rx="4.700" ry="5.800" fill="#c39c83"/><path d="M23.500 9 C23 3 33 3 32.500 11 C31 6.500 26 6.500 23.500 9Z" fill="#2d2a28"/>
<ellipse cx="13.500" cy="53.500" rx="2" ry="2.200" fill="#c8a58c"/>
</g></g></svg>

<svg style="left:1369px;top:820px" width="59" height="42" viewBox="0 0 59 42">
<defs><linearGradient id="g3" x1="0" y1="0" x2="0" y2="1"><stop offset="0" stop-color="#67615e"/><stop offset=".25" stop-color="#726b67"/><stop offset=".5" stop-color="#6b6461"/><stop offset=".8" stop-color="#7e7572"/><stop offset="1" stop-color="#6e6662"/></linearGradient><filter id="b3" x="-10%" y="-10%" width="120%" height="120%"><feGaussianBlur stdDeviation=".9"/></filter><clipPath id="c3"><rect x="1" y="1" width="57" height="40"/></clipPath></defs>
<rect width="59" height="42" fill="#fff"/>
<g clip-path="url(#c3)"><rect x="1" y="1" width="57" height="40" fill="url(#g3)"/>
<g filter="url(#b3)"><rect x="31" y="6.500" width="16" height="2.600" fill="#d9a545"/><rect x="14" y="9" width="5" height="1.600" fill="#d8b66a"/><path d="M9 11 L11 9.500 L13 10.500 L18 10 L21 8 L24 8.500 L26 6 L29 5.500 L32 7.500 L37 9 L41 11 L45 12.500 L52 13 L58 13.500 L30 15 Z" fill="#34302e"/><ellipse cx="30" cy="23" rx="14" ry="4.500" fill="#59534f"/><ellipse cx="16" cy="32" rx="18" ry="5" fill="#857c78"/></g>
<path d="M27 41 L38 39.500 L45 37 L50 36.500 L53 35 L58 35.500 L58 41 Z" fill="#1d1a19" filter="url(#b1)"/>
</g></svg>

<svg style="left:1368px;top:908px" width="60" height="52" viewBox="0 0 60 52">
<rect width="60" height="52" fill="#fff"/><rect x="1" y="1" width="6" height="2.500" rx="1" fill="#d8342c"/>
<rect x="4" y="5" width="56" height="31" fill="#58585b"/>
<g filter="url(#b1)"><rect x="4" y="5" width="56" height="7" fill="#77787a"/><path d="M34 14 L58 12 L59 20 L36 21 Z" fill="#8a8b8d"/><g fill="#e4e4e4"><path d="M38 13 L41 13 L38 18 L35 18Z"/><path d="M44 13 L47 13 L45 18 L42 18Z"/><path d="M50 13 L53 13 L52 18 L49 18Z"/><path d="M56 12.500 L59 12.500 L59 17.500 L56 18Z"/><rect x="34" y="24.500" width="22" height="2" /></g>
<path d="M8 36 C9 20 13 12 19 10 L27 10 C31 14 32 24 30 36 Z" fill="#8e8983"/><ellipse cx="22" cy="8" rx="4" ry="3.500" fill="#6a5a50"/><path d="M5 12 L9 12 L9 34 L5 34Z" fill="#c9c9cb"/><rect x="28" y="27" width="4" height="6" fill="#d8d8d8" transform="rotate(-20 30 30)"/></g>
<rect x="4" y="34" width="56" height="2.500" fill="#1c1c1c"/><rect x="4" y="33.500" width="12" height="1" fill="#d8342c"/>
<g fill="#8a8a8a"><rect x="6" y="39.500" width="52" height="1.200"/><rect x="7" y="42.500" width="50" height="1.200"/><rect x="6" y="45.500" width="10" height=".8"/></g>
<rect x="6" y="47.500" width="3" height="3.500" fill="#4a78c8"/><rect x="10.500" y="48.500" width="9.500" height="2" fill="#e0453c"/><rect x="52" y="49.500" width="6" height=".8" fill="#bbb"/>
</svg>

<svg style="left:1368px;top:995px" width="60" height="43" viewBox="0 0 60 43">
<rect width="60" height="43" fill="#fff"/><rect width="60" height="4" fill="#1958a6"/><rect x="8" y="1" width="30" height="2" fill="#cfe0f4"/><rect x="42" y="1.500" width="13" height="1.200" fill="#8fb2dd"/>
<g id="fc"><rect x="1" y="8" width="8" height="9" fill="#cfe3f6"/><ellipse cx="5" cy="12" rx="2.400" ry="2.800" fill="#e2b89a"/><path d="M2.500 11.500 C2.500 8 7.500 8 7.500 11.500 C6.500 10 3.500 10 2.500 11.500Z" fill="#2a2522"/><path d="M1.500 17 C2 14.500 8 14.500 8.500 17Z" fill="#2c3140"/>
<g fill="#9a9a9a"><rect x="1" y="5.500" width="4" height="1.200" fill="#555"/><rect x="11" y="8.500" width="9" height="1.500" fill="#777"/><rect x="11" y="11.500" width="17" height=".9"/><rect x="11" y="13.500" width="15" height=".9"/><rect x="14" y="15.800" width="14" height=".9"/></g></g>
<use href="#fc" x="31"/><use href="#fc" y="13"/><use href="#fc" x="31" y="13"/><use href="#fc" y="26"/><use href="#fc" x="31" y="26"/>
</svg>

<!--PAGE4-->

<!-- scrollbar -->
<div class="abs" id="scroll"></div>
<div class="abs" id="thumb"></div>

<!-- ===== mac menubar ===== -->
<div class="abs" id="menubar">
<svg style="left:20px;top:2px" width="15" height="17" viewBox="0 0 170 200"><path fill="#111" d="M150 147c-3 7-6 13-10 19-5 8-10 13-13 16-6 5-11 8-18 8-5 0-10-1-17-4-7-3-13-4-18-4-6 0-12 1-19 4-7 3-12 4-16 5-6 0-12-3-18-8-4-3-9-9-14-17-6-9-11-19-15-31C-12 122-14 110-14 98c0-14 3-26 9-36 5-8 11-14 19-19 8-5 16-7 25-7 5 0 12 2 20 5 8 3 13 5 16 5 2 0 8-2 18-6 9-3 17-5 24-4 18 1 31 8 40 21-16 10-24 23-24 41 0 14 5 25 15 34 4 4 9 8 15 10-1 3-2 7-4 10zM109 4c0 11-4 20-12 30-9 11-21 17-33 16 0-1 0-3 0-4 0-10 4-21 12-30 4-4 9-8 15-11 6-3 12-5 17-5 0 1 0 3 0 4z" transform="translate(20,8) scale(0.93)"/></svg>
<span class="t" style="left:54px;font-weight:bold;letter-spacing:.25px">Firefox</span>
<span class="t" style="left:121px">ファイル</span>
<span class="t" style="left:195px">編集</span>
<span class="t" style="left:241px">表示</span>
<span class="t" style="left:286px">履歴</span>
<span class="t" style="left:332px">ブックマーク</span>
<span class="t" style="left:434px">ツール</span>
<span class="t" style="left:494px">ウインドウ</span>
<span class="t" style="left:582px">ヘルプ</span>
<span class="t" style="left:1777px">木 13:17</span>
<svg style="left:1627px;top:3px" width="18" height="16" viewBox="0 0 18 16"><g fill="none" stroke="#111" stroke-width="1.7" stroke-linecap="round"><path d="M1.500 5.500a10.500 10.500 0 0 1 15 0"/><path d="M4 8.200a7 7 0 0 1 10 0"/><path d="M6.300 10.700a3.800 3.800 0 0 1 5.400 0"/></g><circle cx="9" cy="13.200" r="2.300" fill="#111"/></svg>
<svg style="left:1656px;top:3px" width="17" height="16" viewBox="0 0 17 16"><g fill="#111"><path d="M4.400.5 8.500 3.200 4.400 5.900.3 3.200z"/><path d="M12.600.5 16.700 3.200 12.600 5.900 8.500 3.200z"/><path d="M4.400 5.900 8.500 8.600 4.400 11.300.3 8.600z"/><path d="M12.600 5.900 16.700 8.600 12.600 11.300 8.500 8.600z"/><path d="M8.500 9.700 12.200 12.200 8.500 14.800 4.800 12.200z"/></g></svg>
<svg style="left:1685px;top:4px" width="19" height="14" viewBox="0 0 19 14"><g fill="none" stroke="#111" stroke-width="1.9"><path d="M6 12.600a5 5 0 0 1-1.200-9.900 5.600 5.600 0 0 1 9.600 1.100 4.500 4.500 0 0 1-.4 8.800z"/><circle cx="7.400" cy="7.900" r="2.500"/><path d="M9.300 6.200a2.600 2.600 0 1 1 .2 3.600"/></g></svg>
<div class="abs" style="left:1718px;top:3px;width:16px;height:16px;border-radius:2.500px;background:#2a2a2a"></div>
<span class="t" style="left:1721.500px;top:4px;font-size:13px;line-height:14px;color:#fff">A</span>
<svg style="left:1746px;top:3px" width="19" height="15" viewBox="0 0 19 15"><g fill="none" stroke="#222" stroke-width="1.600" stroke-linecap="round"><path d="M1 5.200a12 12 0 0 1 17 0"/><path d="M3.800 8a8 8 0 0 1 11.400 0"/><path d="M6.500 10.700a4.200 4.200 0 0 1 6 0"/></g><circle cx="9.500" cy="13.200" r="1.300" fill="#222"/></svg>
<svg style="left:1849px;top:5px" width="15" height="14" viewBox="0 0 15 14"><circle cx="5.800" cy="5.800" r="4.600" fill="none" stroke="#222" stroke-width="1.400"/><path d="M9.200 9.200l4.800 4.300" stroke="#222" stroke-width="1.700" stroke-linecap="round"/></svg>
<svg style="left:1878px;top:6px" width="19" height="10" viewBox="0 0 19 10"><g fill="#111"><rect x="0" y="0" width="2.200" height="2"/><rect x="4" y="0" width="15" height="2"/><rect x="0" y="4" width="2.200" height="2"/><rect x="4" y="4" width="11" height="2"/><rect x="0" y="8" width="2.200" height="2"/><rect x="4" y="8" width="15" height="2"/></g></svg>

</div>
<div class="abs" id="winedge"></div>

<!-- ===== tab bar ===== -->
<div class="abs" id="tabbar"></div>
<div class="abs" id="navbar"></div>
<div class="abs" style="left:8px;top:36px;width:12px;height:12px;border-radius:50%;background:#fc605b;border:0.5px solid #df4a44"></div>
<div class="abs" style="left:28px;top:36px;width:12px;height:12px;border-radius:50%;background:#fdbc40;border:0.5px solid #de9f34"></div>
<div class="abs" style="left:48px;top:36px;width:12px;height:12px;border-radius:50%;background:#34c84a;border:0.5px solid #27aa35"></div>
<svg style="left:60px;top:31px" width="270" height="31" viewBox="0 0 270 31">
<defs><linearGradient id="tg" x1="0" y1="0" x2="0" y2="1"><stop offset="0" stop-color="#f6f6f6"/><stop offset="1" stop-color="#ececec"/></linearGradient></defs>
<path d="M10 30.5 C19 30.5 21 27 24 15 C26.5 5.500 28 2 33 2 L225 2 C230 2 231.5 5.500 234 15 C237 27 239 30.5 248 30.5 Z" fill="url(#tg)" stroke="#a9a9a9" stroke-width="1"/>
<rect x="11.5" y="29.5" width="235" height="1.5" fill="#eeeeee"/>
</svg>
<span class="t" style="left:92.5px;top:42px;font-family:'Liberation Serif',serif;font-weight:bold;font-size:12px;color:#ff0033;letter-spacing:-.5px;transform:scaleX(1.35);transform-origin:0 0">Y<i>!</i></span>
<span class="t" style="left:118px;top:43px;font-size:11.3px;color:#222">「チーム力高めたかった」…</span>
<span class="t" style="left:273px;top:43px;font-size:10px;font-weight:bold;color:#8a8a8a">✖</span>
<div class="abs" style="left:305px;top:47px;width:11px;height:2px;background:#6a6a6a"></div><div class="abs" style="left:309.5px;top:42.5px;width:2px;height:11px;background:#6a6a6a"></div>

<!-- ===== nav bar ===== -->
<div class="field" style="left:30px;width:1252px"></div>
<div class="field" style="left:1291px;width:358px"></div>
<div class="abs" style="left:7px;top:67px;width:30px;height:30px;border-radius:50%;background:#fdfdfd;box-shadow:0 0 0 1px rgba(0,0,0,.28),0 1px 1px rgba(0,0,0,.2)"></div>
<svg style="left:14px;top:74px" width="16" height="16" viewBox="0 0 16 16"><path d="M7.6 1.2 L0.6 8 L7.6 14.8 L9.6 12.8 L6.2 9.5 H14 V6.5 H6.2 L9.6 3.2 Z" fill="#4a4a4a"/></svg>
<svg style="left:43px;top:75px" width="14" height="14" viewBox="0 0 14 14"><circle cx="7" cy="7" r="6.5" fill="#adadad"/><path d="M3 3.2c1.2-.4 2.4.2 3.3-.2.6.8-.3 1.5.3 2.2.8.6 1.9.2 2.4 1.2.2 1.2-1 1.5-1.2 2.6-.3.9-.9 1.6-1.700 1.500-.6-.9.1-2-.7-2.800C4.700 7 3.500 6.800 3.100 5.700 2.900 4.900 3.400 4 3 3.200zM9.500 2.200c.9.100 1.700.8 2.200 1.600-.7.300-1.500 0-2-.5-.3-.4-.5-.8-.2-1.100z" fill="#e9e9e9"/></svg>
<span class="t" id="url" style="left:62px;top:76px;font-size:12.35px;color:#888">headlines.<span style="color:#111">yahoo.co.jp</span>/hl?a=20151008-00000527-san-soci</span>
<svg style="left:1233.6px;top:78.6px" width="10" height="8" viewBox="0 0 10 8"><path d="M.7.7h8.600L5 7.200z" fill="#e6e6e6" stroke="#b4b4b4" stroke-width="1"/></svg>
<div class="abs" style="left:1249px;top:75px;width:1px;height:14px;background:#cfcfcf"></div>
<svg style="left:1258.2px;top:75.6px" width="14" height="14" viewBox="0 0 14 14"><path d="M11.300 8.100A4.300 4.300 0 1 1 9.500 3.600" fill="none" stroke="#383838" stroke-width="2.4"/><path d="M7 .9h5.600v5.600z" fill="#383838"/></svg>
<svg style="left:1296.5px;top:74.3px" width="14" height="14" viewBox="0 0 14 14"><circle cx="5.500" cy="5.500" r="3.900" fill="none" stroke="#8d8d8d" stroke-width="1.700"/><path d="M8.400 8.400l4.200 4.200" stroke="#8d8d8d" stroke-width="2.300" stroke-linecap="round"/></svg>
<span class="t" style="left:1318px;top:77px;font-size:11.3px;color:#858585">検索</span>
<svg style="left:1659px;top:73px" width="18" height="18" viewBox="0 0 18 18"><path d="M9 1.800l2.100 4.700 5.100.5-3.800 3.400 1.100 5L9 12.800l-4.500 2.600 1.100-5L1.800 7l5.100-.5z" fill="none" stroke="#4c4c4c" stroke-width="1.600" stroke-linejoin="round"/></svg>
<div class="abs" style="left:1682px;top:73px;width:1px;height:18px;background:#c4c4c4"></div>
<svg style="left:1689px;top:74px" width="15" height="15" viewBox="0 0 15 15"><path d="M5.500 2.500 7.500.8l2 1.700h3.300c.7 0 1.200.5 1.200 1.200v8.600c0 .7-.5 1.200-1.200 1.200H2.200c-.7 0-1.200-.5-1.200-1.200V3.700c0-.7.5-1.200 1.200-1.200z" fill="#4c4c4c"/><g fill="#e4e4e4"><rect x="2.600" y="5" width="2" height="1.600"/><rect x="5.600" y="5" width="6.800" height="1.600"/><rect x="2.600" y="7.700" width="2" height="1.600"/><rect x="5.600" y="7.700" width="6.800" height="1.600"/><rect x="2.600" y="10.400" width="2" height="1.600"/><rect x="5.600" y="10.400" width="6.800" height="1.600"/></g></svg>
<svg style="left:1719px;top:75px" width="16" height="14" viewBox="0 0 16 14"><path d="M1.500 0h13c.8 0 1.500.7 1.500 1.500v4.700a8 8 0 0 1-16 0V1.500C0 .7.700 0 1.500 0z" fill="#4c4c4c"/><path d="M4.300 4.800 8 8.300l3.700-3.500" fill="none" stroke="#e4e4e4" stroke-width="2" stroke-linecap="round" stroke-linejoin="round"/></svg>
<svg style="left:1752px;top:75px" width="14" height="14" viewBox="0 0 14 14"><path d="M4.800 0h4.400v6.200h4.200L7 13.500.6 6.200h4.200z" fill="#4c4c4c"/></svg>
<svg style="left:1783px;top:74px" width="16" height="15" viewBox="0 0 16 15"><path d="M8 .5.300 7.600l1.200 1.200L8 3l6.500 5.800 1.200-1.200z" fill="#4c4c4c"/><path d="M8 4.500 2.800 9.200V14.500h3.700v-4h3v4h3.700V9.200z" fill="#4c4c4c"/></svg>
<svg style="left:1814px;top:75px" width="16" height="15" viewBox="0 0 16 15"><path d="M15.500.3 0 8.300l4.300 1.500L13 2.800 6 10.500v4l2.400-2.800 3.300 1.500z" fill="#4c4c4c"/></svg>
<svg style="left:1847px;top:74px" width="16" height="16" viewBox="0 0 16 16"><path d="M8 .8c4.100 0 7.400 2.900 7.400 6.400S12.100 13.600 8 13.600c-.8 0-1.500-.1-2.200-.3L2.500 15.300l.8-3C1.600 11.100.6 9.300.6 7.200.6 3.700 3.900.8 8 .8z" fill="#4c4c4c"/><circle cx="5.600" cy="5.700" r="1" fill="#e4e4e4"/><circle cx="10.400" cy="5.700" r="1" fill="#e4e4e4"/><path d="M4.300 8.300a4 4 0 0 0 7.400 0z" fill="#e4e4e4"/></svg>
<div class="abs" style="left:1877px;top:64px;width:1px;height:36px;background:linear-gradient(rgba(0,0,0,0),rgba(0,0,0,.13) 30%,rgba(0,0,0,.13) 70%,rgba(0,0,0,0))"></div>
<div class="abs" style="left:1891px;top:75px;width:16px;height:3px;border-radius:1.5px;background:#4a4a4a"></div>
<div class="abs" style="left:1891px;top:80.500px;width:16px;height:3px;border-radius:1.5px;background:#4a4a4a"></div>
<div class="abs" style="left:1891px;top:86px;width:16px;height:3px;border-radius:1.5px;background:#4a4a4a"></div>


<!-- ===== bookmarks ===== -->
<svg style="left:12px;top:103.7px" width="16" height="14" viewBox="0 0 16 14"><defs><linearGradient id="fg0" x1="0" y1="0" x2="0" y2="1"><stop offset="0" stop-color="#a9c7e3"/><stop offset="1" stop-color="#6f9ccb"/></linearGradient></defs><path d="M.5 2.500c0-.8.400-1.200 1.200-1.200h4.300l1.200 1.500h7.100c.8 0 1.200.4 1.200 1.200v8.300c0 .7-.4 1.200-1.200 1.200H1.700c-.8 0-1.200-.5-1.200-1.200z" fill="url(#fg0)" stroke="#4f7aa8" stroke-width=".8"/><path d="M1 4.600h14" stroke="#dbe8f4" stroke-width=".8"/></svg>
<span class="bm" style="left:33px">生活</span>
<div class="dd" style="left:59px"></div>
<svg style="left:81px;top:103.7px" width="16" height="14" viewBox="0 0 16 14"><defs><linearGradient id="fg1" x1="0" y1="0" x2="0" y2="1"><stop offset="0" stop-color="#a9c7e3"/><stop offset="1" stop-color="#6f9ccb"/></linearGradient></defs><path d="M.5 2.500c0-.8.400-1.200 1.200-1.200h4.300l1.200 1.500h7.100c.8 0 1.200.4 1.200 1.200v8.300c0 .7-.4 1.200-1.200 1.200H1.700c-.8 0-1.200-.5-1.200-1.200z" fill="url(#fg1)" stroke="#4f7aa8" stroke-width=".8"/><path d="M1 4.600h14" stroke="#dbe8f4" stroke-width=".8"/></svg>
<span class="bm" style="left:102px">買い物</span>
<div class="dd" style="left:139px"></div>
<svg style="left:161px;top:103.7px" width="16" height="14" viewBox="0 0 16 14"><defs><linearGradient id="fg2" x1="0" y1="0" x2="0" y2="1"><stop offset="0" stop-color="#a9c7e3"/><stop offset="1" stop-color="#6f9ccb"/></linearGradient></defs><path d="M.5 2.500c0-.8.400-1.200 1.200-1.200h4.300l1.200 1.500h7.100c.8 0 1.200.4 1.200 1.200v8.300c0 .7-.4 1.200-1.200 1.200H1.700c-.8 0-1.200-.5-1.200-1.200z" fill="url(#fg2)" stroke="#4f7aa8" stroke-width=".8"/><path d="M1 4.600h14" stroke="#dbe8f4" stroke-width=".8"/></svg>
<span class="bm" style="left:182px">音楽</span>
<div class="dd" style="left:208px"></div>
<svg style="left:230px;top:103.7px" width="16" height="14" viewBox="0 0 16 14"><defs><linearGradient id="fg3" x1="0" y1="0" x2="0" y2="1"><stop offset="0" stop-color="#a9c7e3"/><stop offset="1" stop-color="#6f9ccb"/></linearGradient></defs><path d="M.5 2.500c0-.8.400-1.200 1.200-1.200h4.300l1.200 1.500h7.100c.8 0 1.200.4 1.200 1.200v8.300c0 .7-.4 1.200-1.200 1.200H1.700c-.8 0-1.200-.5-1.200-1.200z" fill="url(#fg3)" stroke="#4f7aa8" stroke-width=".8"/><path d="M1 4.600h14" stroke="#dbe8f4" stroke-width=".8"/></svg>
<span class="bm" style="left:251px">写真</span>
<div class="dd" style="left:277px"></div>
<svg style="left:299px;top:103.7px" width="16" height="14" viewBox="0 0 16 14"><defs><linearGradient id="fg4" x1="0" y1="0" x2="0" y2="1"><stop offset="0" stop-color="#a9c7e3"/><stop offset="1" stop-color="#6f9ccb"/></linearGradient></defs><path d="M.5 2.500c0-.8.400-1.200 1.200-1.200h4.300l1.200 1.500h7.100c.8 0 1.200.4 1.200 1.200v8.300c0 .7-.4 1.200-1.200 1.200H1.700c-.8 0-1.200-.5-1.200-1.200z" fill="url(#fg4)" stroke="#4f7aa8" stroke-width=".8"/><path d="M1 4.600h14" stroke="#dbe8f4" stroke-width=".8"/></svg>
<span class="bm" style="left:320px">参考</span>
<div class="dd" style="left:346px"></div>
<svg style="left:367px;top:103.7px" width="16" height="14" viewBox="0 0 16 14"><defs><linearGradient id="fg5" x1="0" y1="0" x2="0" y2="1"><stop offset="0" stop-color="#a9c7e3"/><stop offset="1" stop-color="#6f9ccb"/></linearGradient></defs><path d="M.5 2.500c0-.8.400-1.200 1.200-1.200h4.300l1.200 1.500h7.100c.8 0 1.200.4 1.200 1.200v8.300c0 .7-.4 1.200-1.200 1.200H1.700c-.8 0-1.200-.5-1.200-1.200z" fill="url(#fg5)" stroke="#4f7aa8" stroke-width=".8"/><path d="M1 4.600h14" stroke="#dbe8f4" stroke-width=".8"/></svg>
<span class="bm" style="left:388px">27</span>
<div class="dd" style="left:405px"></div>
<div class="abs" style="left:427px;top:102px;width:16px;height:16px;background:#fff;border:1px solid #e98a2b"></div><span class="t" style="left:430px;top:102px;font-size:16px;font-weight:bold;color:#2a1fe0">F</span>
<span class="bm" style="left:448px">ファイルポスト</span>
<svg style="left:541px;top:102px" width="16" height="16" viewBox="0 0 16 16"><circle cx="2.0" cy="2.0" r="1.2" fill="#f08a24"/><circle cx="5.0" cy="1.5" r="1.3" fill="#f08a24"/><circle cx="8.0" cy="2.0" r="1.4" fill="#f08a24"/><circle cx="3.0" cy="5.0" r="1.3" fill="#f08a24"/><circle cx="6.2" cy="4.8" r="1.6" fill="#f08a24"/><circle cx="9.5" cy="5.0" r="1.7" fill="#f08a24"/><circle cx="12.5" cy="5.5" r="1.3" fill="#f08a24"/><circle cx="4.5" cy="8.0" r="1.3" fill="#f08a24"/><circle cx="7.7" cy="8.2" r="1.7" fill="#f08a24"/><circle cx="11.0" cy="8.5" r="1.7" fill="#f08a24"/><circle cx="14.0" cy="8.5" r="1.2" fill="#f08a24"/><circle cx="6.5" cy="11.2" r="1.3" fill="#f08a24"/><circle cx="9.5" cy="11.7" r="1.6" fill="#f08a24"/><circle cx="12.7" cy="11.7" r="1.3" fill="#f08a24"/><circle cx="9.0" cy="14.5" r="1.2" fill="#f08a24"/><circle cx="12.0" cy="14.5" r="1.0" fill="#f08a24"/></svg>
<span class="bm" style="left:562px">ロイター</span>
<div class="abs" style="left:621px;top:102px;width:16px;height:16px;background:#f7d117"></div><div class="abs" style="left:624px;top:105px;width:10px;height:2px;background:#222"></div><div class="abs" style="left:625px;top:109px;width:8px;height:3px;background:#222"></div><div class="abs" style="left:624px;top:114px;width:10px;height:1px;background:#222"></div>
<span class="bm" style="left:642px">タイムズ</span>
<svg style="left:701px;top:103.7px" width="16" height="14" viewBox="0 0 16 14"><defs><linearGradient id="fg9" x1="0" y1="0" x2="0" y2="1"><stop offset="0" stop-color="#a9c7e3"/><stop offset="1" stop-color="#6f9ccb"/></linearGradient></defs><path d="M.5 2.500c0-.8.400-1.200 1.200-1.200h4.300l1.200 1.500h7.100c.8 0 1.200.4 1.200 1.200v8.300c0 .7-.4 1.200-1.200 1.200H1.700c-.8 0-1.200-.5-1.200-1.200z" fill="url(#fg9)" stroke="#4f7aa8" stroke-width=".8"/><path d="M1 4.600h14" stroke="#dbe8f4" stroke-width=".8"/></svg>
<span class="bm" style="left:722px">仕事</span>
<div class="dd" style="left:748px"></div>
<svg style="left:770px;top:103.7px" width="16" height="14" viewBox="0 0 16 14"><defs><linearGradient id="fg10" x1="0" y1="0" x2="0" y2="1"><stop offset="0" stop-color="#a9c7e3"/><stop offset="1" stop-color="#6f9ccb"/></linearGradient></defs><path d="M.5 2.500c0-.8.400-1.200 1.200-1.200h4.300l1.200 1.500h7.100c.8 0 1.200.4 1.200 1.200v8.300c0 .7-.4 1.200-1.200 1.200H1.700c-.8 0-1.200-.5-1.200-1.200z" fill="url(#fg10)" stroke="#4f7aa8" stroke-width=".8"/><path d="M1 4.600h14" stroke="#dbe8f4" stroke-width=".8"/></svg>
<span class="bm" style="left:791px">HW</span>
<div class="dd" style="left:812px"></div>
<span class="t" style="left:835px;top:104.5px;font-family:'Liberation Serif',serif;font-weight:bold;font-size:12px;color:#ff0033;letter-spacing:-.5px;transform:scaleX(1.35);transform-origin:0 0">Y<i>!</i></span>
<span class="bm" style="left:856px">乗換案内</span>


<div class="abs" style="left:0;top:23px;width:5px;height:5px;background:#222"><div class="abs" style="left:0;top:0;width:5px;height:5px;border-top-left-radius:5px;background:#e2e2e2"></div></div>
<div class="abs" style="left:1915px;top:23px;width:5px;height:5px;background:#222"><div class="abs" style="left:0;top:0;width:5px;height:5px;border-top-right-radius:5px;background:#e2e2e2"></div></div>
<div class="abs" style="left:0;top:1191px;width:5px;height:5px;background:#2b2b2b"><div class="abs" style="left:0;top:0;width:5px;height:5px;border-bottom-left-radius:5px;background:#f7f7f7"></div></div>
<div class="abs" style="left:1915px;top:1191px;width:5px;height:5px;background:#1b1b1b"><div class="abs" style="left:0;top:0;width:5px;height:5px;border-bottom-right-radius:5px;background:#fafafa"></div></div>
<!--CHROMEEND-->

<div class="abs" id="blackbar"></div><div class="abs" style="left:0;top:1195.6px;width:32px;height:5px;background:linear-gradient(90deg,#3c3c3c,#2a2a2a)"></div>
</body>
</html>
